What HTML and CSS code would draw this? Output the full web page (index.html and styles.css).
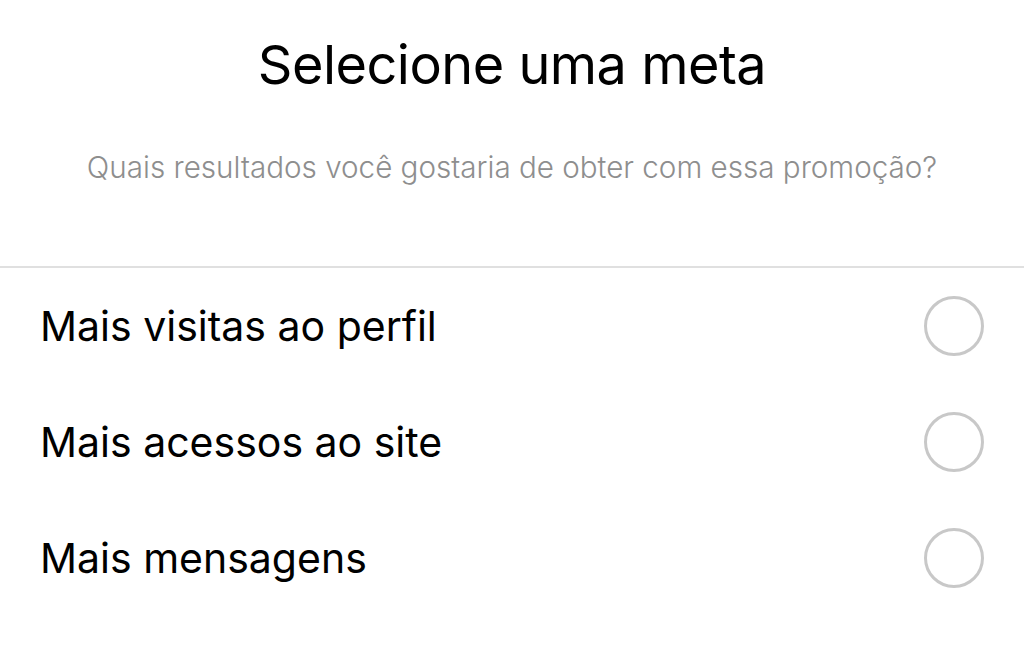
FILE: index.html
```html
<!DOCTYPE html>
<html lang="pt">
<head>
    <meta charset="UTF-8">
    <meta name="viewport" content="width=device-width, initial-scale=1.0">
    <title>Selecione uma meta</title>
    <link rel="stylesheet" href="styles.css">
</head>
<body>
    <div class="header">
        <h1>Selecione uma meta</h1>
        <p class="subtitle">Quais resultados você gostaria de obter com essa promoção?</p>
    </div>
    <ul class="goal-list">
        <li class="goal">
            <span class="goal-label">Mais visitas ao perfil</span>
            <span class="radio"></span>
        </li>
        <li class="goal">
            <span class="goal-label">Mais acessos ao site</span>
            <span class="radio"></span>
        </li>
        <li class="goal">
            <span class="goal-label">Mais mensagens</span>
            <span class="radio"></span>
        </li>
    </ul>
</body>
</html>
```

FILE: styles.css
```css
body {
    font-family: 'Inter', 'Noto Sans', sans-serif;
    margin: 0;
    background: #ffffff;
    color: #000000;
}

.header {
    text-align: center;
    padding-top: 32px;
    height: 268px;
    box-sizing: border-box;
    border-bottom: 2px solid #e0e0e0;
}

h1 {
    font-size: 54px;
    font-weight: 400;
    margin: 0;
    line-height: 66px;
    letter-spacing: -0.5px;
}

.subtitle {
    font-size: 29.6px;
    font-weight: 300;
    color: #8e8e8e;
    margin: 52px 0 0;
    line-height: 34px;
}

.goal-list {
    list-style: none;
    margin: 0;
    padding: 0;
}

.goal {
    display: flex;
    align-items: center;
    justify-content: space-between;
    height: 116px;
    padding: 0 40px;
}

.goal-label {
    font-size: 41px;
}

.radio {
    width: 54px;
    height: 54px;
    border: 3px solid #c8c8c8;
    border-radius: 50%;
}
```
